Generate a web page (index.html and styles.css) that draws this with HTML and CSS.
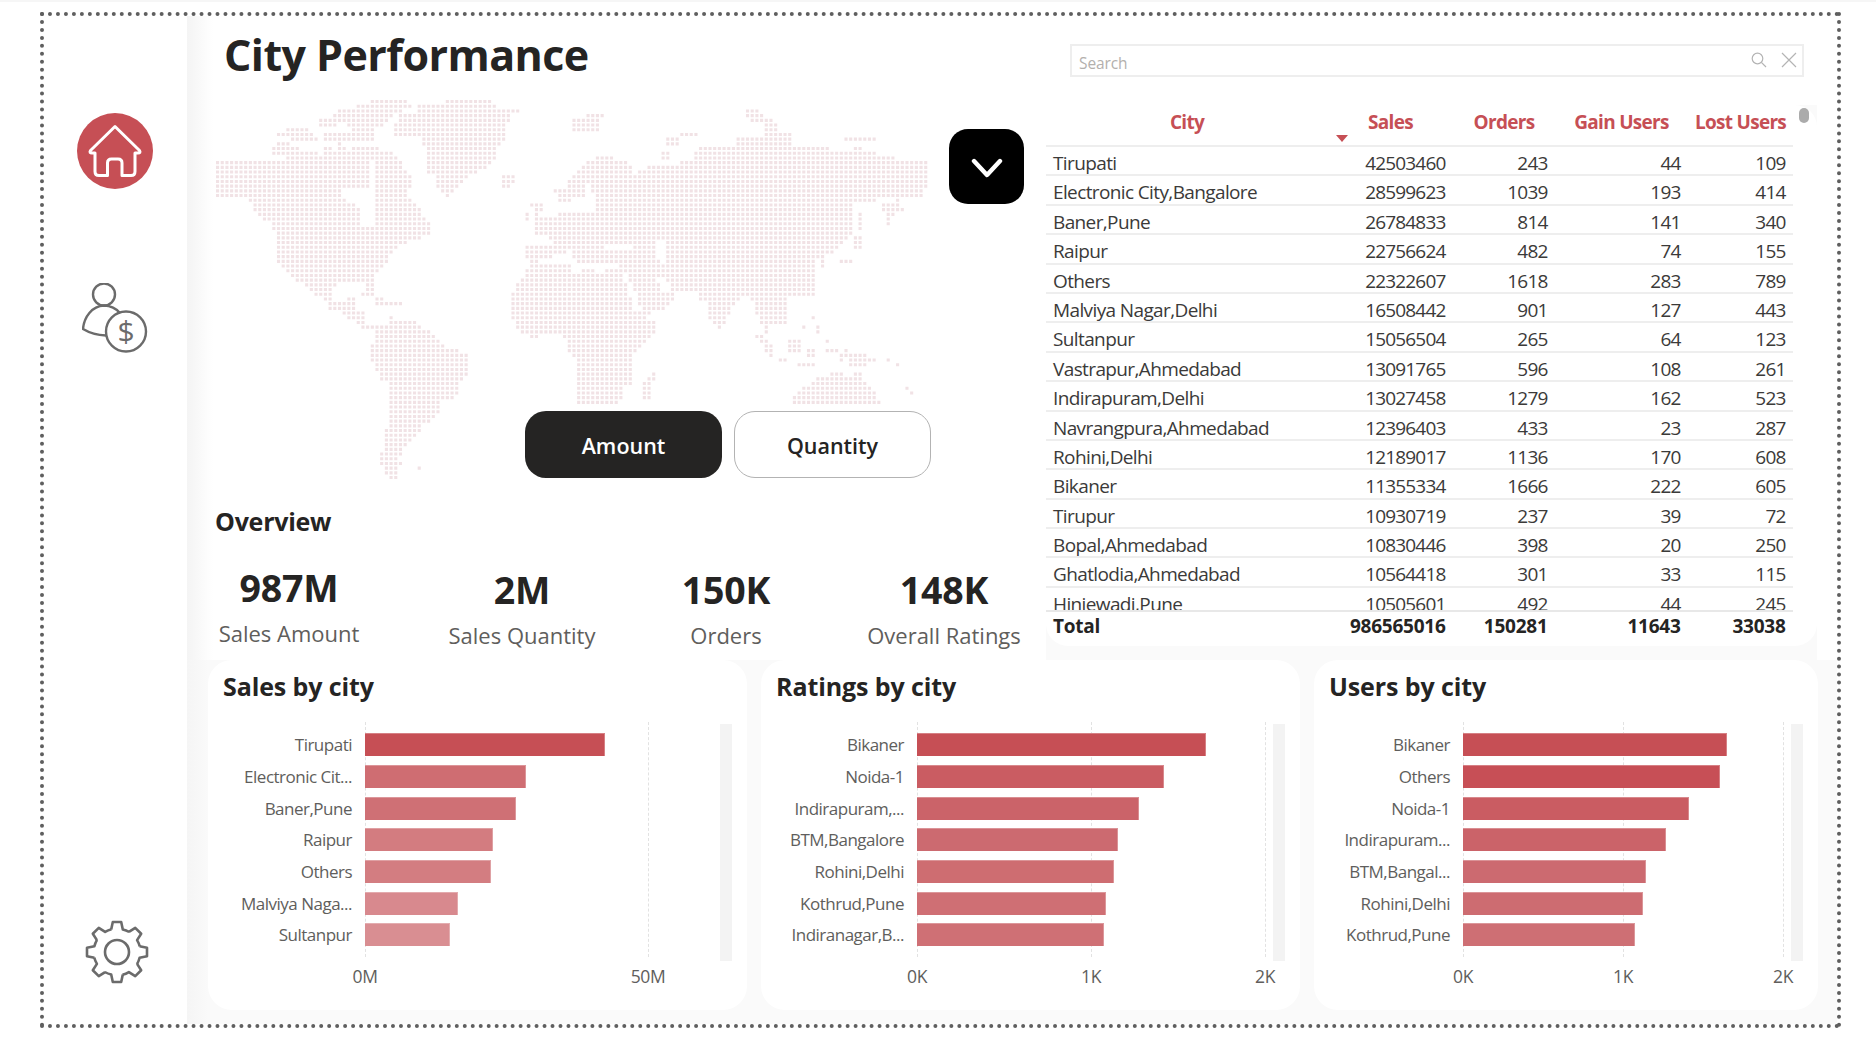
FILE: index.html
```html
<!DOCTYPE html>
<html lang="en">
<head>
<meta charset="utf-8">
<title>City Performance</title>
<link rel="stylesheet" href="styles.css">
</head>
<body>
<div class="frame">
  <nav class="sidebar">
    <svg class="ico-home" viewBox="0 0 76 76" width="76" height="76">
      <circle cx="38" cy="38" r="38" fill="#c64f55"/>
      <path d="M38 13.5 L13.5 37.5 Q12 40 15 40 H18 V58.5 Q18 62.5 22 62.5 H30.5 V50 Q30.5 46 34.5 46 H41 Q45 46 45 50 V62.5 H54 Q58 62.5 58 58.5 V40 H61 Q64 40 62.5 37.5 Z" fill="none" stroke="#fff" stroke-width="3" stroke-linejoin="round"/>
    </svg>
    <svg class="ico-user" viewBox="0 0 66 70" width="66" height="70" fill="none" stroke="#6b6b6b" stroke-width="2.4">
      <circle cx="22" cy="11.5" r="11"/>
      <path d="M38 30 Q32 23 22 22.5 C10 23 2 34 1 46 Q11 52 24 52.5"/>
      <circle cx="44" cy="48.5" r="20"/>
      <text x="44" y="59" text-anchor="middle" class="dollar">$</text>
    </svg>
    <svg class="ico-gear" viewBox="-33 -33 66 66" width="66" height="66" fill="none" stroke="#6b6b6b" stroke-width="2.6" stroke-linejoin="round">
      <defs><path id="tooth" d="M-5.8 -22.6 L-4.2 -30 H4.2 L5.8 -22.6 A23.5 23.5 0 0 1 12.2 -20"/></defs>
      <use href="#tooth"/>
      <use href="#tooth" transform="rotate(45)"/>
      <use href="#tooth" transform="rotate(90)"/>
      <use href="#tooth" transform="rotate(135)"/>
      <use href="#tooth" transform="rotate(180)"/>
      <use href="#tooth" transform="rotate(225)"/>
      <use href="#tooth" transform="rotate(270)"/>
      <use href="#tooth" transform="rotate(315)"/>
      <circle r="12"/>
    </svg>
  </nav>

  <main class="main">
    <section class="top">
      <div class="left">
        <h1 class="title">City Performance</h1>
        <div class="map">
          <svg id="worldmap" class="map-svg" width="720" height="392" viewBox="0 0 720 392"><path id="mapdots" fill="#f1e2e5"/></svg>
          <button class="chevron-btn" aria-label="Open">
            <svg viewBox="0 0 32 20" width="32" height="20"><path d="M3 3 L16 17 L29 3" fill="none" stroke="#fff" stroke-width="4.4" stroke-linecap="round" stroke-linejoin="round"/></svg>
          </button>
          <div class="toggle">
            <span class="tog tog-on">Amount</span>
            <span class="tog tog-off">Quantity</span>
          </div>
        </div>
        <h2 class="overview">Overview</h2>
        <div class="kpis">
          <div class="kpi kpi-a"><div class="kpi-val">987M</div><div class="kpi-lab">Sales Amount</div></div>
          <div class="kpi kpi-b"><div class="kpi-val">2M</div><div class="kpi-lab">Sales Quantity</div></div>
          <div class="kpi kpi-c"><div class="kpi-val">150K</div><div class="kpi-lab">Orders</div></div>
          <div class="kpi kpi-d"><div class="kpi-val">148K</div><div class="kpi-lab">Overall Ratings</div></div>
        </div>
      </div>

      <div class="right">
        <div class="search-wrap">
          <div class="search">
            <span class="search-text">Search</span>
            <svg class="search-ico" viewBox="0 0 16 16" width="16" height="16" fill="none" stroke="#b4b4b4" stroke-width="1.2"><circle cx="6.5" cy="6.5" r="5.3"/><path d="M10.4 10.4 L15 15"/></svg>
            <svg class="search-ico" viewBox="0 0 16 16" width="16" height="16" fill="none" stroke="#b4b4b4" stroke-width="1.2"><path d="M1 1 L15 15 M15 1 L1 15"/></svg>
          </div>
        </div>
        <div class="panel">
          <span class="thumb"></span>
          <span class="sort"></span>
          <div class="row head"><span>City</span><span>Sales</span><span>Orders</span><span>Gain Users</span><span>Lost Users</span></div>
          <div class="rows">
            <div class="row"><span>Tirupati</span><span>42503460</span><span>243</span><span>44</span><span>109</span></div>
            <div class="row"><span>Electronic City,Bangalore</span><span>28599623</span><span>1039</span><span>193</span><span>414</span></div>
            <div class="row"><span>Baner,Pune</span><span>26784833</span><span>814</span><span>141</span><span>340</span></div>
            <div class="row"><span>Raipur</span><span>22756624</span><span>482</span><span>74</span><span>155</span></div>
            <div class="row"><span>Others</span><span>22322607</span><span>1618</span><span>283</span><span>789</span></div>
            <div class="row"><span>Malviya Nagar,Delhi</span><span>16508442</span><span>901</span><span>127</span><span>443</span></div>
            <div class="row"><span>Sultanpur</span><span>15056504</span><span>265</span><span>64</span><span>123</span></div>
            <div class="row"><span>Vastrapur,Ahmedabad</span><span>13091765</span><span>596</span><span>108</span><span>261</span></div>
            <div class="row"><span>Indirapuram,Delhi</span><span>13027458</span><span>1279</span><span>162</span><span>523</span></div>
            <div class="row"><span>Navrangpura,Ahmedabad</span><span>12396403</span><span>433</span><span>23</span><span>287</span></div>
            <div class="row"><span>Rohini,Delhi</span><span>12189017</span><span>1136</span><span>170</span><span>608</span></div>
            <div class="row"><span>Bikaner</span><span>11355334</span><span>1666</span><span>222</span><span>605</span></div>
            <div class="row"><span>Tirupur</span><span>10930719</span><span>237</span><span>39</span><span>72</span></div>
            <div class="row"><span>Bopal,Ahmedabad</span><span>10830446</span><span>398</span><span>20</span><span>250</span></div>
            <div class="row"><span>Ghatlodia,Ahmedabad</span><span>10564418</span><span>301</span><span>33</span><span>115</span></div>
            <div class="row"><span>Hinjewadi,Pune</span><span>10505601</span><span>492</span><span>44</span><span>245</span></div>
          </div>
          <div class="row total"><span>Total</span><span>986565016</span><span>150281</span><span>11643</span><span>33038</span></div>
        </div>
      </div>
    </section>

    <section class="cards">
      <article class="card">
        <h3 class="card-title">Sales by city</h3>
        <div class="chart lab-129">
          <i class="gl" style="left:142px"></i><i class="gl" style="left:425px"></i><i class="track"></i>
          <div class="bar-row"><span class="lab">Tirupati</span><b class="bar" style="width:240px;background:#c64f55"></b></div>
          <div class="bar-row"><span class="lab">Electronic Cit...</span><b class="bar" style="width:161px;background:#cf6d72"></b></div>
          <div class="bar-row"><span class="lab">Baner,Pune</span><b class="bar" style="width:151px;background:#cf7075"></b></div>
          <div class="bar-row"><span class="lab">Raipur</span><b class="bar" style="width:128px;background:#d37c80"></b></div>
          <div class="bar-row"><span class="lab">Others</span><b class="bar" style="width:126px;background:#d37d81"></b></div>
          <div class="bar-row"><span class="lab">Malviya Naga...</span><b class="bar" style="width:93px;background:#d8898e"></b></div>
          <div class="bar-row"><span class="lab">Sultanpur</span><b class="bar" style="width:85px;background:#d98e92"></b></div>
        </div>
        <div class="axis"><span class="tick" style="left:142px">0M</span><span class="tick" style="left:425px">50M</span></div>
      </article>

      <article class="card">
        <h3 class="card-title">Ratings by city</h3>
        <div class="chart lab-128">
          <i class="gl" style="left:141px"></i><i class="gl" style="left:315px"></i><i class="gl" style="left:489px"></i><i class="track"></i>
          <div class="bar-row"><span class="lab">Bikaner</span><b class="bar" style="width:289px;background:#c64f55"></b></div>
          <div class="bar-row"><span class="lab">Noida-1</span><b class="bar" style="width:247px;background:#ca5c62"></b></div>
          <div class="bar-row"><span class="lab">Indirapuram,...</span><b class="bar" style="width:222px;background:#cb6369"></b></div>
          <div class="bar-row"><span class="lab">BTM,Bangalore</span><b class="bar" style="width:201px;background:#cc6a70"></b></div>
          <div class="bar-row"><span class="lab">Rohini,Delhi</span><b class="bar" style="width:197px;background:#ce6d71"></b></div>
          <div class="bar-row"><span class="lab">Kothrud,Pune</span><b class="bar" style="width:189px;background:#cf6f74"></b></div>
          <div class="bar-row"><span class="lab">Indiranagar,B...</span><b class="bar" style="width:187px;background:#cf7075"></b></div>
        </div>
        <div class="axis"><span class="tick" style="left:141px">0K</span><span class="tick" style="left:315px">1K</span><span class="tick" style="left:489px">2K</span></div>
      </article>

      <article class="card">
        <h3 class="card-title">Users by city</h3>
        <div class="chart lab-121">
          <i class="gl" style="left:134px"></i><i class="gl" style="left:294px"></i><i class="gl" style="left:454px"></i><i class="track"></i>
          <div class="bar-row"><span class="lab">Bikaner</span><b class="bar" style="width:264px;background:#c64f55"></b></div>
          <div class="bar-row"><span class="lab">Others</span><b class="bar" style="width:257px;background:#c74f56"></b></div>
          <div class="bar-row"><span class="lab">Noida-1</span><b class="bar" style="width:226px;background:#ca5c62"></b></div>
          <div class="bar-row"><span class="lab">Indirapuram...</span><b class="bar" style="width:203px;background:#cb6369"></b></div>
          <div class="bar-row"><span class="lab">BTM,Bangal...</span><b class="bar" style="width:183px;background:#cc6a70"></b></div>
          <div class="bar-row"><span class="lab">Rohini,Delhi</span><b class="bar" style="width:180px;background:#cd6c71"></b></div>
          <div class="bar-row"><span class="lab">Kothrud,Pune</span><b class="bar" style="width:172px;background:#ce6f74"></b></div>
        </div>
        <div class="axis"><span class="tick" style="left:134px">0K</span><span class="tick" style="left:294px">1K</span><span class="tick" style="left:454px">2K</span></div>
      </article>
    </section>
  </main>
</div>
<script src="map.js"></script>
</body>
</html>
```

FILE: styles.css
```css
* { box-sizing: border-box; }
html, body { margin: 0; padding: 0; background: #fff; }
body {
  width: 1876px;
  height: 1046px;
  overflow: hidden;
  font-family: "Open Sans", "Noto Sans", sans-serif;
  color: #252423;
  padding: 10px 35px 0 40px;
  border-top: 2px solid #f6f6f6;
}

.frame {
  display: flex;
  width: 1801px;
  height: 1016px;
  border: 4px dotted #5f5f5f;
}

/* sidebar */
.sidebar {
  width: 143px;
  flex: none;
  display: flex;
  flex-direction: column;
  align-items: center;
  padding: 97px 2px 39px 0;
}
.ico-user { margin-top: 94px; margin-left: 1px; }
.ico-gear { margin-top: auto; margin-left: 5px; }
.dollar { font-family: "Open Sans", sans-serif; font-size: 30px; fill: #6b6b6b; stroke: none; font-weight: 400; }

/* main */
.main { flex: 1; display: flex; flex-direction: column; min-width: 0; }
.top {
  display: flex;
  height: 644px;
  padding-left: 21px;
  background: linear-gradient(90deg, #f4f4f4 0, #fff 26px);
}
.left { width: 838px; flex: none; display: flex; flex-direction: column; }
.title { margin: 0; padding-left: 16px; font-size: 43px; line-height: 78px; height: 76px; font-weight: 700; letter-spacing: -0.55px; white-space: nowrap; }
.map { position: relative; height: 400px; flex: none; }
.map-svg { display: block; margin: 8px 0 0 8px; }

.chevron-btn {
  position: absolute;
  left: 741px;
  top: 37px;
  width: 75px;
  height: 75px;
  border: 0;
  border-radius: 19px;
  background: #000;
  display: flex;
  align-items: center;
  justify-content: center;
  padding: 2px 0 0;
}
.toggle { position: absolute; left: 317px; top: 319px; display: flex; gap: 12px; }
.tog {
  width: 197px;
  height: 67px;
  border-radius: 21px;
  display: flex;
  align-items: center;
  justify-content: center;
  padding-top: 2px;
  font-size: 21.5px;
  font-weight: 600;
}
.tog-on { background: #252423; color: #fff; }
.tog-off { background: #fff; border: 1.5px solid #b3b3b3; color: #252423; }

.overview { margin: 4px 0 0; padding-left: 7px; font-size: 25px; line-height: 50px; height: 52px; font-weight: 700; letter-spacing: -0.25px; }
.kpis { display: flex; padding-top: 19px; text-align: center; }
.kpi { flex: none; }
.kpi-a { width: 162px; margin-top: -2px; }
.kpi-b { width: 164px; margin-left: 70px; }
.kpi-c { width: 152px; margin-left: 46px; }
.kpi-d { width: 192px; margin-left: 46px; }
.kpi-val { font-size: 37.5px; line-height: 46px; font-weight: 700; letter-spacing: -0.2px; }
.kpi-lab { font-size: 22px; line-height: 45px; color: #605e5c; white-space: nowrap; }

/* right column */
.right { width: 771px; flex: none; background: #fafafa; }
.search-wrap { height: 89px; padding: 28px 13px 0 24px; background: #fff; }
.search {
  height: 33px;
  border: 2px solid #eeeeee;
  display: flex;
  align-items: center;
  gap: 14px;
  padding: 0 5px 0 7px;
}
.search-text { flex: 1; font-size: 15.5px; color: #b3b0ad; padding-top: 4px; letter-spacing: -0.1px; }
.search-ico { flex: none; margin-top: -1px; }

.panel { position: relative; height: 541px; background: #fff; border-radius: 0 22px 22px 22px; }
.thumb { position: absolute; left: 753px; top: 3px; width: 10px; height: 15px; border-radius: 5px; background: #ababab; }
.sort {
  position: absolute;
  left: 290px;
  top: 30px;
  width: 0;
  height: 0;
  border-left: 6.5px solid transparent;
  border-right: 6.5px solid transparent;
  border-top: 7px solid #c64f55;
}
.row {
  display: grid;
  grid-template-columns: 282px 125px 102px 133px 105px;
  width: 747px;
  height: 29.4px;
  border-bottom: 2px solid #eeeeee;
  font-size: 19px;
  line-height: 33px;
  letter-spacing: -0.62px;
  color: #3b3a39;
  white-space: nowrap;
}
.row span { padding: 0 7.5px 0 7px; text-align: right; }
.row span:first-child { text-align: left; }
.row span + span { letter-spacing: -0.82px; }
.head { height: 42px; line-height: 34px; color: #c64f55; font-weight: 700; }
.head span, .head span:first-child { text-align: center; padding: 0; }
.row.head span { letter-spacing: -0.7px; }
.rows { height: 463px; overflow: hidden; }
.total { border-top: 2px solid #e8e8e8; border-bottom: 0; height: 32px; line-height: 29px; font-weight: 700; color: #252423; }
.row.total span { letter-spacing: -0.25px; }

/* cards */
.cards {
  flex: 1;
  display: grid;
  grid-template-columns: 539px 539px 504px;
  column-gap: 14px;
  padding: 0 0 14px 21px;
  background: linear-gradient(90deg, #f5f5f5 0, #fafafa 21px);
}
.card { background: #fff; border-radius: 24px; padding-left: 15px; }
.card-title { margin: 0 0 6px; font-size: 25px; line-height: 52px; height: 56px; font-weight: 700; color: #252423; letter-spacing: -0.1px; }
.chart { position: relative; height: 235px; padding-top: 7px; }
.gl { position: absolute; top: 0; bottom: 0; width: 0; border-left: 1px dashed #e2e2e2; }
.track { position: absolute; right: 15px; top: 2px; width: 12px; height: 237px; background: #f3f3f3; }
.bar-row { display: flex; align-items: center; gap: 13px; height: 31.67px; }
.lab { flex: none; text-align: right; font-size: 17px; letter-spacing: -0.5px; color: #605e5c; white-space: nowrap; }
.lab-129 .lab { width: 129px; }
.lab-128 .lab { width: 128px; }
.lab-121 .lab { width: 121px; }
.bar { position: relative; display: block; height: 23px; border-top: 1px solid rgba(255,255,255,.28); border-right: 1px solid rgba(255,255,255,.28); }
.axis { position: relative; height: 38px; }
.tick { position: absolute; top: 0; transform: translateX(-50%); font-size: 17.5px; letter-spacing: -0.4px; line-height: 38px; color: #605e5c; }
```

FILE: map.js
```js
// Dot-matrix world map: land outlines are traced as polygons and sampled on a regular grid.
(function () {
  var ORIGIN_X = 216, ORIGIN_Y = 100, PITCH_X = 4.69, PITCH_Y = 4.7, DOT = 3.1;

  // groups of [originX, originY, scale, polygons]
  var land = [
    [0, 0, 1, [
      [[215,160],[286,160],[286,156],[323,156],[325,151],[387,151],[400,157],[403,170],[413,175],[410,188],[407,195],[418,208],[427,218],[432,233],[417,239],[407,243],[393,252],[385,265],[373,277],[374,297],[368,297],[365,280],[340,283],[332,290],[335,305],[352,305],[356,320],[368,328],[363,328],[340,313],[316,295],[296,280],[277,263],[277,233],[269,223],[253,213],[249,200],[232,200],[232,197],[215,197]]
    ]],
    [210, 95, 3, [
      [[710,12],[850,12],[860,40],[900,42],[900,54],[880,100],[890,135],[860,160],[860,195],[830,225],[780,240],[750,265],[730,295],[716,305],[685,290],[680,240],[655,232],[655,160],[640,150],[628,125],[555,122],[540,98],[570,60],[625,55],[625,30],[710,25]],
      [[485,12],[595,12],[590,28],[610,38],[540,65],[520,95],[430,95],[400,85],[372,80],[372,55],[385,42],[440,42],[440,26],[485,26]],
      [[315,68],[355,68],[385,95],[330,95]],
      [[228,98],[298,98],[298,110],[325,125],[325,137],[245,137],[245,125],[200,125],[200,112],[228,112]],
      [[345,112],[430,112],[430,98],[495,98],[495,137],[345,137]],
      [[200,140],[240,140],[240,152],[200,152]],
      [[186,155],[270,155],[270,165],[300,168],[340,180],[240,195],[228,180],[186,180]],
      [[342,155],[368,155],[368,180],[342,180]],
      [[385,140],[396,140],[396,150],[385,150]],
      [[385,155],[410,155],[410,165],[385,165]],
      [[428,155],[510,155],[510,170],[428,170]]
    ]],
    [330, 290, 3, [
      [[95,8],[135,8],[135,18],[95,18]],
      [[125,22],[160,22],[160,45],[138,45]],
      [[165,36],[220,36],[220,48],[165,48]],
      [[0,40],[50,35],[50,25],[78,25],[78,65],[108,65],[108,105],[135,105],[135,120],[95,118],[95,100],[65,88],[68,75],[40,75],[30,60],[0,60]],
      [[180,80],[192,90],[250,92],[262,108],[305,122],[320,150],[345,165],[375,178],[418,195],[418,245],[405,265],[392,275],[392,315],[360,328],[335,335],[335,365],[310,385],[300,400],[280,400],[275,425],[250,445],[230,470],[215,485],[205,510],[218,515],[205,535],[205,570],[180,570],[165,550],[152,525],[152,490],[165,475],[165,420],[180,415],[180,275],[150,272],[138,245],[122,212],[122,165],[138,145],[138,110],[180,95]],
      [[265,532],[275,532],[275,542],[265,542]]
    ]],
    [500, 95, 3, [
      [[0,42],[62,42],[62,52],[30,65],[20,100],[20,135],[5,150],[0,150]],
      [[0,240],[48,240],[48,265],[18,280],[0,265]],
      [[208,68],[262,68],[265,55],[318,55],[318,68],[300,68],[300,108],[222,108],[208,82]],
      [[745,42],[770,42],[775,58],[812,72],[825,85],[840,110],[880,112],[882,135],[868,150],[700,150],[715,128],[790,125],[795,105],[785,85],[735,70],[730,55]],
      [[535,112],[600,112],[600,122],[535,122]],
      [[505,125],[545,125],[530,150],[490,155],[490,140]],
      [[477,168],[500,168],[515,185],[515,195],[490,195]],
      [[1025,125],[1125,125],[1125,138],[1025,138]],
      [[165,282],[205,282],[205,255],[235,225],[262,197],[295,183],[330,183],[360,197],[400,210],[400,240],[430,225],[440,208],[530,208],[535,195],[575,195],[590,168],[590,155],[660,155],[700,150],[870,150],[980,155],[985,168],[1005,170],[1055,165],[1055,155],[1080,155],[1085,168],[1125,170],[1130,182],[1180,182],[1185,195],[1280,197],[1280,282],[1265,305],[1125,305],[1125,320],[1065,320],[1055,335],[1055,420],[1030,440],[1000,470],[965,480],[950,490],[940,515],[940,600],[935,610],[870,605],[862,630],[855,690],[815,690],[790,700],[760,640],[755,610],[728,610],[695,640],[670,690],[665,715],[640,690],[618,650],[618,622],[590,618],[588,595],[530,590],[530,610],[500,640],[445,660],[420,660],[475,678],[472,702],[430,745],[405,765],[403,855],[375,880],[360,925],[235,925],[222,860],[222,790],[195,770],[195,735],[175,718],[85,728],[50,695],[25,665],[25,610],[50,565],[82,525],[80,452],[160,452],[160,440],[138,425],[108,415],[108,365],[165,365],[195,350],[240,350],[280,345],[280,290],[262,310],[180,320],[165,300]],
      [[1155,325],[1205,310],[1208,345],[1175,365],[1165,388],[1152,385],[1150,330]],
      [[1068,352],[1082,352],[1082,410],[1068,410]],
      [[1058,425],[1082,425],[1082,460],[1058,465]],
      [[1030,495],[1065,480],[1065,505],[1025,505],[1000,518],[985,530],[995,545],[985,545],[985,520]],
      [[955,480],[980,480],[980,518],[955,518]],
      [[95,322],[132,322],[132,336],[118,338],[133,352],[108,360],[108,338],[95,338]],
      [[68,352],[88,340],[90,378],[68,388]],
      [[795,700],[812,700],[812,722],[795,722]],
      [[930,620],[938,620],[938,650],[930,650]],
      [[930,665],[952,665],[952,675],[930,675]],
      [[918,680],[925,680],[905,695],[912,730],[900,730]],
      [[945,695],[965,695],[965,715],[955,715]],
      [[760,720],[785,720],[825,755],[825,785],[800,785],[790,750]],
      [[858,735],[910,735],[910,770],[858,770]],
      [[830,795],[865,795],[865,802],[830,802]],
      [[885,808],[940,808],[940,815],[885,815]],
      [[955,808],[965,808],[965,815],[955,815]],
      [[915,765],[940,765],[940,785],[915,785]],
      [[942,750],[950,750],[950,760],[942,760]],
      [[970,738],[982,738],[982,750],[970,750]],
      [[970,765],[1010,765],[1010,775],[970,775]],
      [[1000,750],[1008,750],[1008,760],[1000,760]],
      [[1025,765],[1050,765],[1050,778],[1095,780],[1125,795],[1125,802],[1105,802],[1095,815],[1040,815],[1040,792],[1012,800],[1012,790]],
      [[1128,765],[1136,765],[1136,785],[1128,785]],
      [[1155,795],[1165,795],[1165,802],[1155,802]],
      [[1183,808],[1193,808],[1193,815],[1183,815]],
      [[1112,822],[1120,822],[1120,830],[1112,830]],
      [[985,835],[1037,835],[1037,845],[1055,845],[1055,835],[1082,835],[1095,855],[1110,880],[1125,890],[1138,925],[870,925],[875,905],[910,880],[955,850],[985,850]],
      [[1212,878],[1222,878],[1222,886],[1212,886]],
      [[1226,892],[1236,892],[1236,900],[1226,900]],
      [[450,835],[472,835],[472,858],[458,860],[458,912],[420,912],[420,865],[440,860]]
    ]]
  ];

  // water inside the land outlines
  var water = [
    [0, 0, 1, [
      [[343,188],[368,188],[368,162],[375,162],[375,228],[362,228],[360,208],[350,202],[343,195]]
    ]],
    [500, 95, 3, [
      [[262,265],[278,265],[278,335],[240,340],[240,320],[262,310]],
      [[160,478],[195,478],[195,465],[215,465],[225,500],[280,505],[350,505],[360,520],[290,530],[270,518],[220,535],[218,510],[165,505],[120,500],[120,490],[160,490]],
      [[320,455],[400,455],[405,462],[320,462]],
      [[465,440],[490,440],[490,500],[470,490]],
      [[365,535],[385,540],[425,655],[405,645]],
      [[470,545],[490,550],[520,590],[490,590]],
      [[400,210],[430,210],[405,240],[400,240]]
    ]]
  ];

  function flatten(groups) {
    var out = [];
    groups.forEach(function (g) {
      g[3].forEach(function (poly) {
        out.push(poly.map(function (p) { return [g[0] + p[0] / g[2], g[1] + p[1] / g[2]]; }));
      });
    });
    return out;
  }

  function inside(poly, x, y) {
    var c = false;
    for (var i = 0, j = poly.length - 1; i < poly.length; j = i++) {
      var a = poly[i], b = poly[j];
      if ((a[1] > y) !== (b[1] > y) && x < (b[0] - a[0]) * (y - a[1]) / (b[1] - a[1]) + a[0]) c = !c;
    }
    return c;
  }

  function any(polys, x, y) {
    return polys.some(function (p) { return inside(p, x, y); });
  }

  var landP = flatten(land), waterP = flatten(water), d = [];
  for (var r = 0; r <= 80; r++) {
    for (var c = 0; c <= 151; c++) {
      var px = ORIGIN_X + c * PITCH_X, py = ORIGIN_Y + r * PITCH_Y;
      var cx = px + DOT / 2, cy = py + DOT / 2;
      if (any(landP, cx, cy) && !any(waterP, cx, cy)) {
        d.push("M" + (px - ORIGIN_X).toFixed(2) + " " + (py - ORIGIN_Y).toFixed(2) + "h" + DOT + "v" + DOT + "h-" + DOT + "z");
      }
    }
  }
  document.getElementById("mapdots").setAttribute("d", d.join(""));
})();
```
